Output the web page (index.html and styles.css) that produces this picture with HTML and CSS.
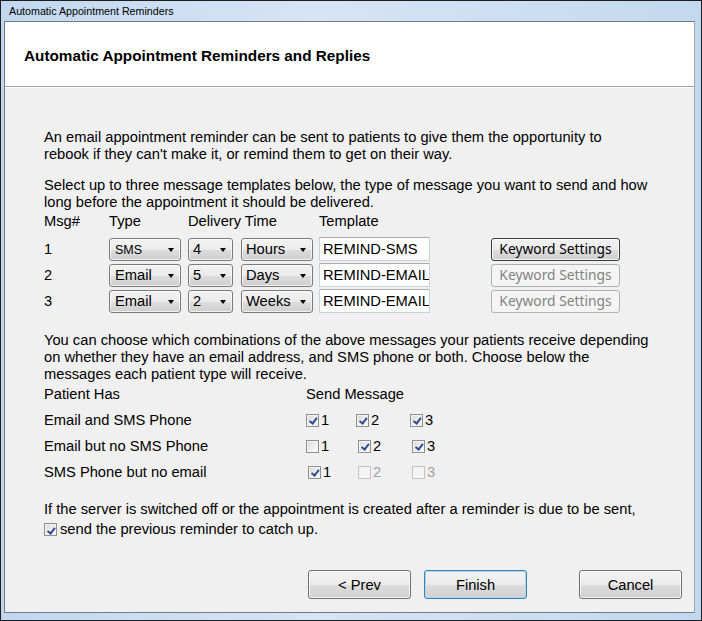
FILE: index.html
```html
<!DOCTYPE html>
<html>
<head>
<meta charset="utf-8">
<link rel="stylesheet" href="styles.css">
</head>
<body>
<div class="window">
  <div class="titlebar">Automatic Appointment Reminders</div>
  <div class="client">
    <div class="header"><h1 class="heading">Automatic Appointment Reminders and Replies</h1></div>
    <div class="content">
      <p class="para p1">An email appointment reminder can be sent to patients to give them the opportunity to<br>rebook if they can't make it, or remind them to get on their way.</p>
      <p class="para p2">Select up to three message templates below, the type of message you want to send and how<br>long before the appointment it should be delivered.</p>
      <div class="msg-grid">
        <div class="colhead">Msg#</div>
        <div class="colhead">Type</div>
        <div class="colhead span2">Delivery Time</div>
        <div class="colhead span2">Template</div>

        <div class="num">1</div>
        <div class="combo w-type"><span class="small">SMS</span><span class="arrow"></span></div>
        <div class="combo w-num"><span>4</span><span class="arrow"></span></div>
        <div class="combo w-unit"><span>Hours</span><span class="arrow"></span></div>
        <div class="textbox">REMIND-SMS</div>
        <div class="btn kw">Keyword Settings</div>

        <div class="num">2</div>
        <div class="combo w-type"><span>Email</span><span class="arrow"></span></div>
        <div class="combo w-num"><span>5</span><span class="arrow"></span></div>
        <div class="combo w-unit"><span>Days</span><span class="arrow"></span></div>
        <div class="textbox">REMIND-EMAIL</div>
        <div class="btn kw disabled">Keyword Settings</div>

        <div class="num">3</div>
        <div class="combo w-type"><span>Email</span><span class="arrow"></span></div>
        <div class="combo w-num"><span>2</span><span class="arrow"></span></div>
        <div class="combo w-unit"><span>Weeks</span><span class="arrow"></span></div>
        <div class="textbox">REMIND-EMAIL</div>
        <div class="btn kw disabled">Keyword Settings</div>
      </div>

      <p class="para p3">You can choose which combinations of the above messages your patients receive depending<br>on whether they have an email address, and SMS phone or both. Choose below the<br>messages each patient type will receive.</p>

      <div class="send-grid">
        <div class="sg-head">Patient Has</div>
        <div class="sg-head span3">Send Message</div>

        <div class="sg-label">Email and SMS Phone</div>
        <label class="chk"><span class="cb on"></span>1</label>
        <label class="chk"><span class="cb on"></span>2</label>
        <label class="chk"><span class="cb on"></span>3</label>

        <div class="sg-label">Email but no SMS Phone</div>
        <label class="chk"><span class="cb"></span>1</label>
        <label class="chk sh2"><span class="cb on"></span>2</label>
        <label class="chk sh2"><span class="cb on"></span>3</label>

        <div class="sg-label">SMS Phone but no email</div>
        <label class="chk sh2"><span class="cb on"></span>1</label>
        <label class="chk sh2 dis"><span class="cb"></span>2</label>
        <label class="chk sh2 dis"><span class="cb"></span>3</label>
      </div>

      <p class="para p4">If the server is switched off or the appointment is created after a reminder is due to be sent,</p>
      <label class="chk catch"><span class="cb on"></span>send the previous reminder to catch up.</label>
    </div>
    <div class="footer">
      <div class="btn big">&lt; Prev</div>
      <div class="btn big default">Finish</div>
      <div class="btn big cancel">Cancel</div>
    </div>
  </div>
</div>
</body>
</html>
```
FILE: styles.css
```css
* { box-sizing: border-box; }
html, body { margin: 0; padding: 0; }
body {
  width: 702px;
  height: 621px;
  overflow: hidden;
  font-family: "Liberation Sans", Arial, sans-serif;
  font-size: 14.7px;
  color: #000;
}
.window {
  width: 702px;
  height: 621px;
  border: 1px solid #1e1e1e;
  background: linear-gradient(to right, #c2d7ef 0%, #d6e5f5 45%, #c3d8ef 100%);
  display: flex;
  flex-direction: column;
  padding: 0 6px 7px 3px;
}
.titlebar {
  height: 20px;
  flex: none;
  font-family: "Liberation Sans", Arial, sans-serif;
  font-size: 10.7px;
  line-height: 20px;
  padding-left: 5px;
  color: #000;
}
.client {
  flex: 1;
  border: 1px solid #6f7b87;
  border-right-color: #9aa6b3;
  background: #f0f0f0;
  display: flex;
  flex-direction: column;
}
.header {
  height: 65px;
  flex: none;
  background: #fff;
  border-bottom: 1px solid #a0a0a0;
  box-shadow: 0 1px 0 #ffffff;
  padding: 25px 0 0 19px;
}
.heading {
  margin: 0;
  font-size: 15.3px;
  font-weight: bold;
  line-height: 18px;
}
.content {
  flex: 1;
  padding: 42px 0 0 39px;
}
.para {
  margin: 0;
  line-height: 17px;
  white-space: nowrap;
}
.p2 { margin-top: 14px; }
.msg-grid {
  display: grid;
  grid-template-columns: 65px 79px 53px 78px 172px 129px;
  grid-template-rows: 25px 26px 26px 26px;
  align-items: center;
}
.colhead { line-height: 17px; align-self: start; padding-top: 2px; }
.colhead.span2 { grid-column: span 2; }
.combo {
  height: 23px;
  border: 1px solid #7a7a7a;
  border-radius: 3px;
  background: linear-gradient(#f2f2f2 0%, #ebebeb 50%, #dddddd 51%, #cfcfcf 100%);
  box-shadow: inset 0 0 0 1px rgba(255,255,255,0.7);
  display: flex;
  align-items: center;
  justify-content: space-between;
  padding: 0 6px 0 5px;
}
.combo .small { font-size: 12.5px; padding-top: 2px; }
.w-type { width: 72px; }
.w-num { width: 45px; padding-left: 4px; }
.w-unit { width: 72px; padding-left: 4px; }
.arrow {
  width: 0; height: 0;
  border-left: 3.5px solid transparent;
  border-right: 3.5px solid transparent;
  border-top: 4px solid #000;
  margin-top: 1px;
}
.textbox {
  width: 111px;
  height: 24px;
  border: 1px solid #c9d3dc;
  border-top-color: #abadb3;
  background: #fff;
  padding: 2px 0 0 3px;
  line-height: 18px;
  white-space: nowrap;
  overflow: hidden;
}
.btn {
  border: 1px solid #707070;
  border-radius: 3px;
  background: linear-gradient(#f2f2f2 0%, #ebebeb 50%, #dddddd 51%, #cfcfcf 100%);
  box-shadow: inset 0 0 0 1px rgba(255,255,255,0.75);
  display: flex;
  align-items: center;
  justify-content: center;
  white-space: nowrap;
  color: #000;
}
.kw {
  width: 129px;
  height: 23px;
  font-family: "Noto Sans", "Open Sans", sans-serif;
  font-size: 13.8px;
  border-color: #3c3c3c;
  padding-bottom: 1px;
}
.kw.disabled {
  border-color: #adb2b5;
  background: #f4f4f4;
  box-shadow: none;
  color: #838383;
}
.p3 { margin-top: 18px; }
.send-grid {
  display: grid;
  grid-template-columns: 262px 50px 54px 60px;
  grid-template-rows: 21px 26px 26px 26px;
  align-items: center;
  margin-top: 3px;
}
.sg-head { line-height: 17px; align-self: start; }
.sg-head.span3 { grid-column: span 3; }
.chk {
  display: flex;
  align-items: center;
  line-height: 17px;
}
.chk.sh2 { padding-left: 2px; }
.chk.dis { color: #a0a0a0; }
.cb {
  width: 13px;
  height: 13px;
  border: 1px solid #8e8f8f;
  background: linear-gradient(135deg, #d6d6d6 0%, #f1f1f1 60%, #ffffff 100%);
  box-shadow: inset 0 0 0 1px #f4f4f4;
  margin-right: 2px;
  flex: none;
  position: relative;
}
.chk.dis .cb {
  border-color: #c3c3c3;
  background: #f4f4f4;
}
.cb.on::after {
  content: "";
  position: absolute;
  left: 3.5px;
  top: 1.5px;
  width: 2.5px;
  height: 5.5px;
  border-right: 2px solid #2e4a92;
  border-bottom: 2px solid #2e4a92;
  transform: rotate(38deg);
}
.p4 { margin-top: 16px; }
.catch { margin-top: 3px; }
.catch .cb { margin-right: 3px; }
.footer {
  flex: none;
  display: flex;
  justify-content: flex-end;
  padding: 0 12px 13px 0;
}
.big {
  width: 103px;
  height: 29px;
}
.big + .big { margin-left: 13px; }
.big.cancel { margin-left: 52px; }
.big.default {
  border-color: #3c7fb1;
  background: linear-gradient(#f2f2f2 0%, #ebebeb 50%, #dddddd 51%, #cfcfcf 100%);
  box-shadow: inset 0 0 0 1px #a9d8f5;
}
```
